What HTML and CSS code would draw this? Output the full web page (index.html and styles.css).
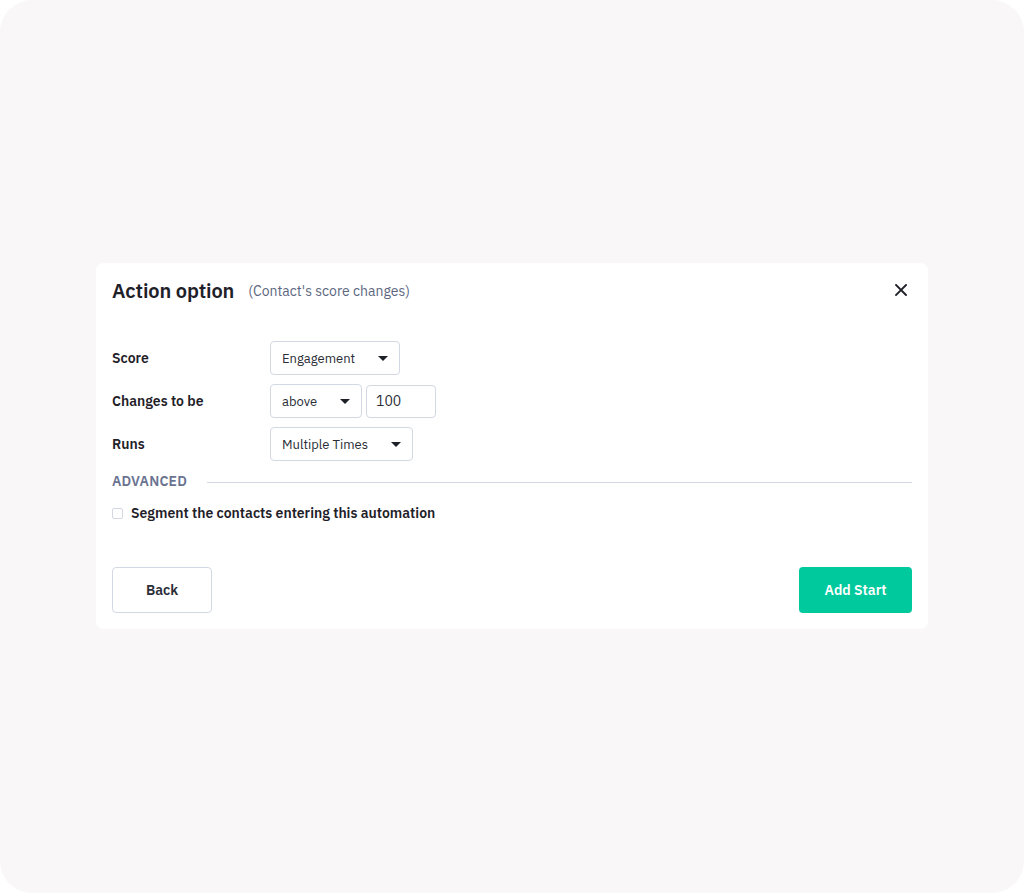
FILE: index.html
```html
<!DOCTYPE html>
<html>
<head>
<meta charset="utf-8">
<link rel="stylesheet" href="styles.css">
</head>
<body>
<div class="frame">
  <div class="modal">
    <div class="header">
      <h1 class="title">Action option</h1>
      <span class="subtitle">(Contact's score changes)</span>
      <button class="close" aria-label="Close">
        <svg width="12" height="12" viewBox="0 0 12 12"><path d="M1 1 L11 11 M11 1 L1 11" stroke="#1f2129" stroke-width="1.9" stroke-linecap="square"/></svg>
      </button>
    </div>
    <div class="form">
      <div class="row">
        <div class="label">Score</div>
        <div class="controls">
          <div class="select w-score"><span>Engagement</span><i class="caret"></i></div>
        </div>
      </div>
      <div class="row">
        <div class="label">Changes to be</div>
        <div class="controls">
          <div class="select w-above"><span>above</span><i class="caret"></i></div>
          <div class="input w-num">100</div>
        </div>
      </div>
      <div class="row">
        <div class="label">Runs</div>
        <div class="controls">
          <div class="select w-runs"><span>Multiple Times</span><i class="caret"></i></div>
        </div>
      </div>
    </div>
    <div class="advanced">
      <span class="adv-label">ADVANCED</span>
      <span class="adv-line"></span>
    </div>
    <label class="check">
      <span class="box"></span>
      <span class="check-text">Segment the contacts entering this automation</span>
    </label>
    <div class="footer">
      <button class="btn btn-back">Back</button>
      <button class="btn btn-primary">Add Start</button>
    </div>
  </div>
</div>
</body>
</html>
```

FILE: styles.css
```css
* { box-sizing: border-box; }
html, body {
  margin: 0;
  padding: 0;
  background: #ffffff;
}
body {
  font-family: "IBM Plex Sans", Inter, "Noto Sans", sans-serif;
  color: #1f2129;
}
.frame {
  width: 1024px;
  height: 893px;
  background: #f9f7f8;
  border-radius: 32px;
  padding-top: 263px;
  padding-left: 96px;
}
.modal {
  width: 832px;
  background: #ffffff;
  border-radius: 8px;
  padding: 14px 16px 16px 16px;
}
.header {
  display: flex;
  align-items: center;
  height: 26px;
}
.title {
  margin: 0;
  font-size: 20px;
  font-weight: 600;
  letter-spacing: -0.1px;
  color: #1f2129;
}
.subtitle {
  margin-left: 14px;
  font-size: 14px;
  color: #5d6780;
  padding-top: 2px;
}
.close {
  margin-left: auto;
  margin-right: 5px;
  background: none;
  border: 0;
  padding: 0;
  width: 12px;
  height: 12px;
  display: flex;
}
.form {
  margin-top: 38px;
  display: flex;
  flex-direction: column;
  gap: 9px;
}
.row {
  display: flex;
  align-items: center;
}
.label {
  width: 158px;
  font-size: 14px;
  font-weight: 600;
  color: #1f2129;
}
.controls {
  display: flex;
  gap: 4px;
  align-items: center;
}
.select, .input {
  height: 34px;
  border: 1px solid #d3d8e3;
  border-radius: 4px;
  display: flex;
  align-items: center;
  padding: 0 11px;
  font-size: 13px;
  color: #2a2d36;
  background: #fff;
}
.select { justify-content: space-between; }
.caret {
  width: 0;
  height: 0;
  border-left: 5px solid transparent;
  border-right: 5px solid transparent;
  border-top: 5px solid #1f2129;
  margin-left: 8px;
}
.w-score { width: 130px; }
.w-above { width: 92px; }
.w-num { width: 70px; height: 33px; padding-left: 9px; font-size: 14px; }
.w-runs { width: 143px; }
.advanced {
  margin-top: 12px;
  display: flex;
  align-items: center;
  height: 16px;
}
.adv-label {
  font-size: 14px;
  font-weight: 600;
  color: #6a7390;
  letter-spacing: 0.2px;
}
.adv-line {
  flex: 1;
  height: 1px;
  background: #d3d8e3;
  margin-left: 20px;
  margin-top: 3px;
}
.check {
  margin-top: 16px;
  display: flex;
  align-items: center;
  height: 16px;
}
.box {
  width: 11px;
  height: 11px;
  border: 1px solid #d3d8e3;
  border-radius: 2px;
  background: #fff;
}
.check-text {
  margin-left: 8px;
  font-size: 14px;
  font-weight: 600;
  color: #1f2129;
}
.footer {
  margin-top: 46px;
  display: flex;
  justify-content: space-between;
}
.btn {
  height: 46px;
  border-radius: 4px;
  font-family: inherit;
  font-size: 14px;
  font-weight: 600;
  cursor: pointer;
}
.btn-back {
  width: 100px;
  background: #fff;
  border: 1px solid #d3d8e3;
  color: #2a2d36;
}
.btn-primary {
  width: 113px;
  background: #00c99d;
  border: 0;
  color: #ffffff;
}
```
